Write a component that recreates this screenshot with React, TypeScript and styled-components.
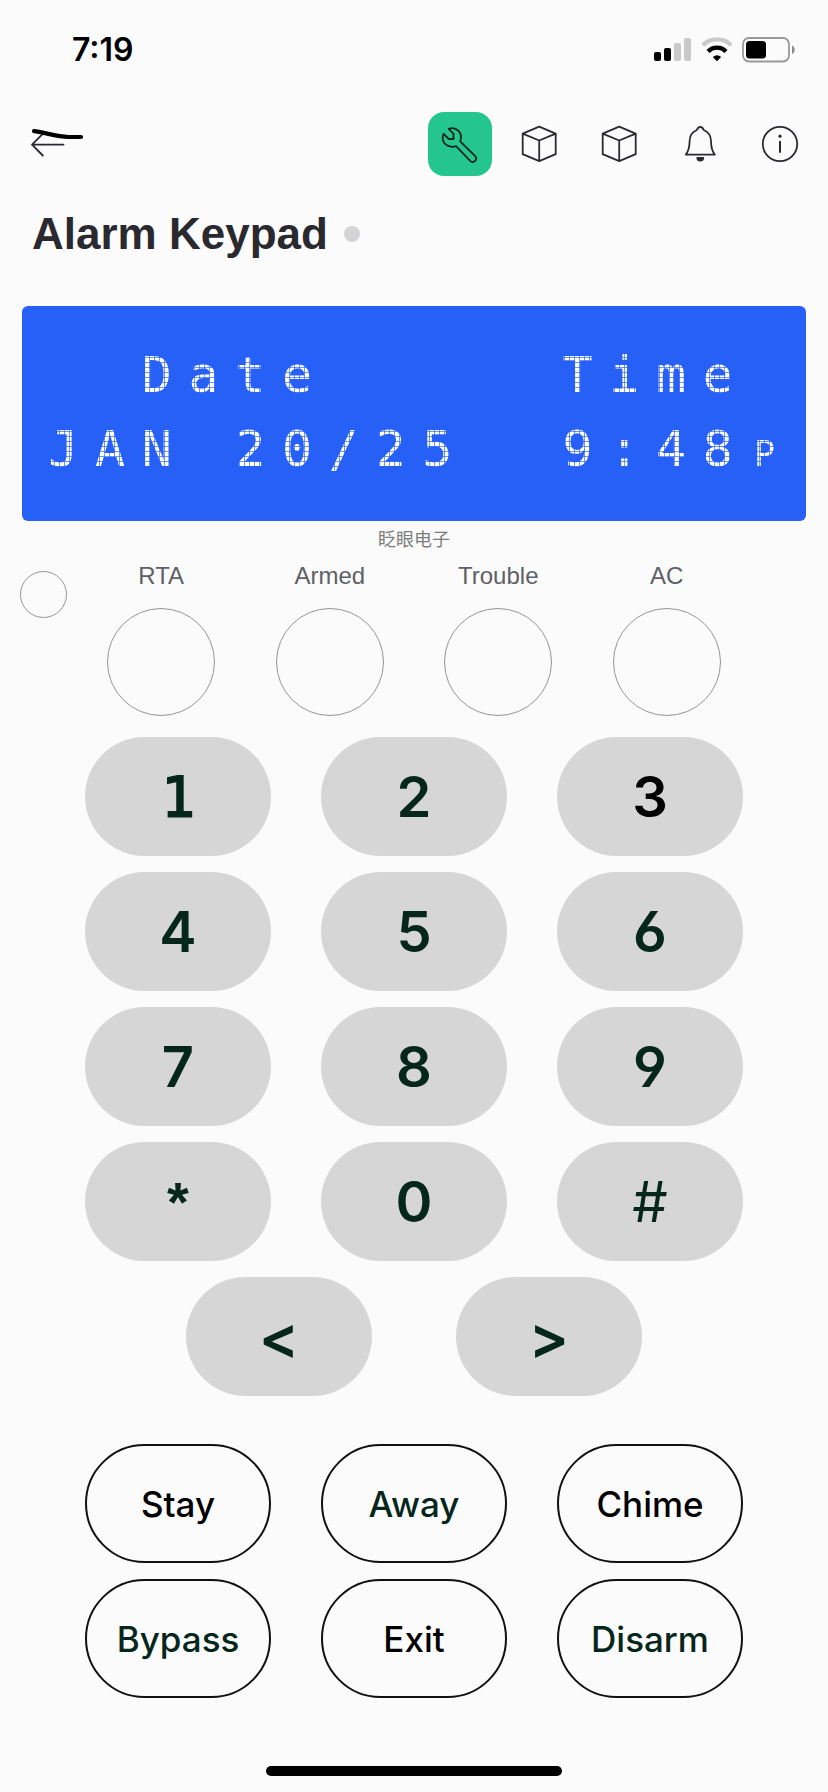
import React from "react";
import styled, { createGlobalStyle, css } from "styled-components";

const GlobalStyle = createGlobalStyle`
  * { box-sizing: border-box; }
  body {
    margin: 0;
    background: #fbfbfb;
    color: #000;
    font-family: Inter, "Liberation Sans", sans-serif;
  }
  button { font-family: inherit; cursor: pointer; }
`;

const INK = "#2a2930";
const GREEN_INK = "#05261b";

const Screen = styled.div`
  min-height: 100vh;
  display: flex;
  flex-direction: column;
`;

const StatusBar = styled.div`
  display: flex;
  align-items: center;
  justify-content: space-between;
  height: 100px;
  padding: 0 32px 0 72px;
`;

const Clock = styled.time`
  font-size: 32px;
  line-height: 40px;
  font-weight: 600;
`;

const StatusIcons = styled.div`
  display: flex;
  align-items: center;
  gap: 9px;
`;

const Toolbar = styled.header`
  display: flex;
  align-items: center;
  justify-content: space-between;
  padding: 12px 16px 0 26px;
`;

const Tools = styled.nav`
  display: flex;
  gap: 16px;
`;

const IconButton = styled.button<{ $active?: boolean }>`
  display: flex;
  align-items: center;
  justify-content: center;
  width: 64px;
  height: 64px;
  padding: 0;
  border: 0;
  border-radius: 16px;
  color: ${(p) => (p.$active ? GREEN_INK : INK)};
  background: ${(p) => (p.$active ? "#25c58f" : "transparent")};
`;

const TitleRow = styled.div`
  display: flex;
  align-items: center;
  gap: 16px;
  padding: 30px 32px 0;
`;

const Title = styled.h1`
  margin: 0;
  font-family: "Liberation Sans", sans-serif;
  font-size: 44px;
  line-height: 56px;
  font-weight: 700;
  color: ${INK};
`;

const Dot = styled.span`
  width: 16px;
  height: 16px;
  border-radius: 50%;
  background: #d4d4d6;
`;

const Display = styled.section`
  margin: 44px 22px 0;
  padding: 32px 18px 35px;
  border-radius: 6px;
  background: #2760f6;
`;

const DisplayLine = styled.div`
  display: grid;
  grid-template-columns: repeat(16, 1fr);
  height: 74px;
  align-items: center;
  -webkit-mask:
    repeating-linear-gradient(to right, #000 0 4px, rgba(0, 0, 0, 0.35) 4px 5px),
    repeating-linear-gradient(to bottom, #000 0 4px, rgba(0, 0, 0, 0.35) 4px 5px);
  -webkit-mask-composite: source-in;
  mask-composite: intersect;
`;

const Cell = styled.span<{ $small?: boolean }>`
  text-align: center;
  white-space: pre;
  color: #fff;
  font-family: "DejaVu Sans Mono", monospace;
  font-size: 50px;
  line-height: 74px;
  ${(p) => p.$small && css`font-variant-caps: small-caps;`}
`;

const Maker = styled.p`
  margin: 8px 0 0;
  text-align: center;
  color: #7d7d7d;
  font-family: "Noto Sans CJK SC", sans-serif;
  font-size: 18px;
  line-height: 18px;
`;

const Indicators = styled.section`
  display: flex;
  padding: 13px 77px 0 20px;
  gap: 10px;
`;

const Lamp = styled.span<{ $size: number }>`
  display: block;
  flex: none;
  width: ${(p) => p.$size}px;
  height: ${(p) => p.$size}px;
  border: 1px solid #959595;
  border-radius: 50%;
`;

const SideLamp = styled.div`
  padding-top: 11px;
`;

const LampGrid = styled.div`
  flex: 1;
  display: grid;
  grid-template-columns: repeat(4, 1fr);
`;

const LampColumn = styled.div`
  display: flex;
  flex-direction: column;
  align-items: center;
  gap: 16px;
  font-family: "Liberation Sans", sans-serif;
  font-size: 24px;
  line-height: 32px;
  color: #5f5f66;
`;

const Pad = styled.section`
  display: grid;
  grid-template-columns: repeat(3, 1fr);
  gap: 16px 50px;
  padding: 0 85px;
  margin-top: 21px;
`;

const keyShape = css`
  height: 119px;
  padding: 0;
  border-radius: 60px;
`;

const keyFaces = {
  digit: css`
    font-size: 56px;
    font-weight: 600;
    font-feature-settings: "cv03", "cv04";
  `,
  slab: css`
    font-family: "DejaVu Sans Mono", monospace;
    font-size: 56px;
    font-weight: 400;
    -webkit-text-stroke: 2px currentColor;
  `,
  star: css`
    font-family: "Liberation Sans", sans-serif;
    font-size: 56px;
    font-weight: 700;
  `,
  hash: css`
    font-size: 56px;
    font-weight: 400;
  `,
  arrow: css`
    font-size: 60px;
    font-weight: 600;
  `,
};

const Key = styled.button<{ $dark?: boolean; $face?: keyof typeof keyFaces }>`
  ${keyShape}
  border: 0;
  background: #d6d6d6;
  color: ${(p) => (p.$dark ? "#000" : GREEN_INK)};
  line-height: 64px;
  ${(p) => keyFaces[p.$face ?? "digit"]}
`;

const ArrowRow = styled.div`
  grid-column: 1 / -1;
  display: flex;
  justify-content: center;
  gap: 84px;

  ${Key} { width: 186px; }
`;

const Actions = styled(Pad)`
  margin-top: 48px;
`;

const Action = styled.button<{ $dark?: boolean }>`
  ${keyShape}
  border: 2px solid #111;
  background: transparent;
  color: ${(p) => (p.$dark ? "#000" : GREEN_INK)};
  font-size: 35px;
  line-height: 40px;
  font-weight: 500;
`;

const HomeBar = styled.div`
  width: 296px;
  height: 10px;
  margin: auto auto 16px;
  border-radius: 5px;
  background: #000;
`;

const Signal = () => (
  <svg width="38" height="26" viewBox="0 0 38 26" aria-label="Signal">
    <rect x="0" y="15" width="7" height="9" rx="2" />
    <rect x="10" y="11" width="7" height="13" rx="2" />
    <rect x="20" y="6" width="7" height="18" rx="2" fill="#c9c9c9" />
    <rect x="30" y="1" width="7" height="23" rx="2" fill="#c9c9c9" />
  </svg>
);

const Wifi = () => (
  <svg width="32" height="26" viewBox="0 0 32 26" fill="none" strokeWidth="4.2" aria-label="Wi-Fi">
    <path d="M1.800 8.200a20.300 20.300 0 0 1 28.400 0" stroke="#c9c9c9" />
    <path d="M7 14.400a12.800 12.800 0 0 1 18 0" stroke="#000" />
    <path d="M11.800 20a6.600 6.600 0 0 1 8.400 0L16 24.200z" fill="#000" />
  </svg>
);

const Battery = () => (
  <svg width="54" height="26" viewBox="0 0 54 26" aria-label="Battery">
    <rect x="1" y="1" width="46" height="23.5" rx="6" fill="none" stroke="#999" strokeWidth="1.8" />
    <rect x="4" y="4" width="20" height="17.5" rx="3.5" />
    <path d="M50 8.500c3.600 1.400 3.600 7 0 8.500z" fill="#8a8a8a" />
  </svg>
);

const BackIcon = () => (
  <svg width="60" height="40" viewBox="0 0 60 40" fill="none" strokeLinecap="round" strokeLinejoin="round" aria-hidden="true">
    <path d="M35.500 20.700H4M14.800 9.800L4 20.700l10.800 10.800" stroke={INK} strokeWidth="1.8" />
    <path d="M6 7.200C14 8 30 12.600 40 13h13" stroke="#000" strokeWidth="4.2" />
  </svg>
);

const line = {
  fill: "none",
  stroke: "currentColor",
  strokeWidth: 1.8,
  strokeLinecap: "round",
  strokeLinejoin: "round",
} as const;

const WrenchIcon = () => (
  <svg width="40" height="40" viewBox="0 0 40 40" {...line} aria-hidden="true">
    <path d="M8.800 4.800C15.500 2.600 21 7.400 21 13c0 2-.8 2.900-.6 4.600L35 31.800c3.200 3.600-1.400 8-4.800 5L16 22.200C10.500 24 3 21.400 2.600 14c0-1.600.3-2.800 1-4.200l5.200 5.200h4.700V9.800z" />
  </svg>
);

const CubeIcon = () => (
  <svg width="40" height="40" viewBox="0 0 40 40" {...line} aria-hidden="true">
    <path d="M19.200 2.600l16.500 7v20.600l-16.500 7-16.500-7V9.600zM2.700 9.600l16.500 6.900 16.500-6.900M19.200 16.500v20.700" />
  </svg>
);

const BellIcon = () => (
  <svg width="40" height="40" viewBox="0 0 40 40" {...line} aria-hidden="true">
    <path d="M20.300 3c-2 0-2.800 1.300-3.400 3-5 2-7.200 6-7.300 11.300-.1 6.500-.8 9.700-3.800 13.300h29c-3-3.600-3.700-6.800-3.800-13.300C30.900 12 28.700 8 23.700 6c-.6-1.700-1.400-3-3.400-3z" />
    <path d="M17.300 34h6c-.6 3.300-5.400 3.300-6 0z" fill="currentColor" />
  </svg>
);

const InfoIcon = () => (
  <svg width="40" height="40" viewBox="0 0 40 40" {...line} aria-hidden="true">
    <circle cx="20" cy="20" r="17.200" />
    <path d="M20 17v11.800" strokeWidth="2" strokeLinecap="butt" />
    <circle cx="20" cy="12.2" r="1.6" fill="currentColor" stroke="none" />
  </svg>
);

const LINES = ["  Date     Time ", "JAN 20/25  9:48p"];
const LAMPS = ["RTA", "Armed", "Trouble", "AC"];
const KEYS = ["1", "2", "3", "4", "5", "6", "7", "8", "9", "*", "0", "#"];
const FACES: Record<string, keyof typeof keyFaces> = { "1": "slab", "*": "star", "#": "hash" };
const ACTIONS = ["Stay", "Away", "Chime", "Bypass", "Exit", "Disarm"];
const DARK = ["3", "Stay", "Chime", "Exit"];

export default function App() {
  return (
    <Screen>
      <GlobalStyle />
      <StatusBar>
        <Clock>7:19</Clock>
        <StatusIcons>
          <Signal />
          <Wifi />
          <Battery />
        </StatusIcons>
      </StatusBar>
      <Toolbar>
        <IconButton aria-label="Back"><BackIcon /></IconButton>
        <Tools>
          <IconButton $active aria-label="Settings"><WrenchIcon /></IconButton>
          <IconButton aria-label="Device"><CubeIcon /></IconButton>
          <IconButton aria-label="Devices"><CubeIcon /></IconButton>
          <IconButton aria-label="Notifications"><BellIcon /></IconButton>
          <IconButton aria-label="Information"><InfoIcon /></IconButton>
        </Tools>
      </Toolbar>
      <TitleRow>
        <Title>Alarm Keypad</Title>
        <Dot />
      </TitleRow>
      <main>
        <Display>
          {LINES.map((text) => (
            <DisplayLine key={text}>
              {[...text].map((char, i) => (
                <Cell key={i} $small={char === "p"}>{char}</Cell>
              ))}
            </DisplayLine>
          ))}
        </Display>
        <Maker lang="zh">眨眼电子</Maker>
        <Indicators>
          <SideLamp><Lamp $size={47} /></SideLamp>
          <LampGrid>
            {LAMPS.map((name) => (
              <LampColumn key={name}>
                {name}
                <Lamp $size={108} />
              </LampColumn>
            ))}
          </LampGrid>
        </Indicators>
        <Pad>
          {KEYS.map((k) => (
            <Key key={k} $dark={DARK.includes(k)} $face={FACES[k]}>{k}</Key>
          ))}
          <ArrowRow>
            <Key $face="arrow">&lt;</Key>
            <Key $face="arrow">&gt;</Key>
          </ArrowRow>
        </Pad>
        <Actions>
          {ACTIONS.map((a) => (
            <Action key={a} $dark={DARK.includes(a)}>{a}</Action>
          ))}
        </Actions>
      </main>
      <HomeBar />
    </Screen>
  );
}
